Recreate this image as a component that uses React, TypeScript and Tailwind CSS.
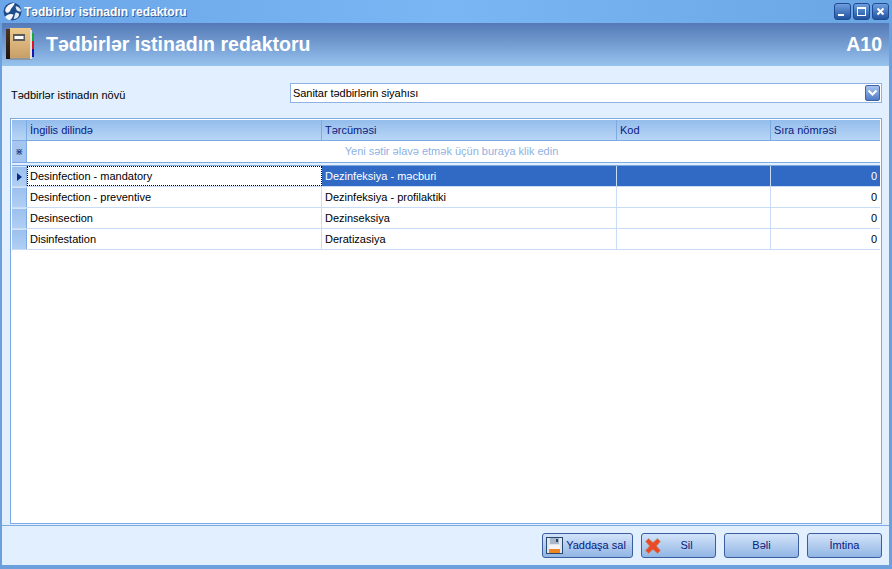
import React from 'react';

const COLS = 'grid grid-cols-[15px_295px_295px_154px_1fr]';

const rows = [
  { en: 'Desinfection - mandatory', az: 'Dezinfeksiya - məcburi', selected: true },
  { en: 'Desinfection - preventive', az: 'Dezinfeksiya - profilaktiki' },
  { en: 'Desinsection', az: 'Dezinseksiya' },
  { en: 'Disinfestation', az: 'Deratizasiya' },
];

const Globe = () => (
  <svg width="19" height="19" viewBox="0 0 18 18">
    <circle cx="9" cy="9" r="8.5" fill="#1c4c8c" />
    <path d="M2 8 C3 3 8 1 11 1 C10 5 8 5 7 8 C5 11 3 11 2 8Z" fill="#f4f8fc" />
    <path d="M12 4 C14 4 17 6 17 9 C14 9 12 8 12 4Z" fill="#dfeaf6" />
    <path d="M2 14 C5 11 8 11 10 12 C9 14 8 17 6 17 C5 17 3 16 2 14Z" fill="#f4f8fc" />
    <path d="M12 10 C14 10 16 11 15 13 C14 15 12 16 10 16 C11 14 11 12 12 10Z" fill="#dfeaf6" />
  </svg>
);

const WinButton = ({ kind }: { kind: 'min' | 'max' | 'close' }) => (
  <div className="w-[17px] h-[17px] rounded-[3px] border border-[#1f4a94] bg-gradient-to-b from-[#6f9fe0] to-[#23539f] flex items-center justify-center">
    <svg width="13" height="13" viewBox="0 0 13 13">
      {kind === 'min' && <rect x="2" y="9" width="6" height="2" fill="#fff" />}
      {kind === 'max' && (
        <path d="M2 2h9v9H2z M3 4v6h7V4z" fill="#fff" fillRule="evenodd" />
      )}
      {kind === 'close' && (
        <path d="M3.5 3l6 6M9.5 3l-6 6" stroke="#fff" strokeWidth="2" transform="translate(0 .5)" />
      )}
    </svg>
  </div>
);

const Notebook = () => (
  <svg width="28" height="33" viewBox="0 0 28 33">
    <defs>
      <linearGradient id="cover" x1="0" y1="0" x2="0" y2="1">
        <stop offset="0" stopColor="#ecc98c" />
        <stop offset="1" stopColor="#c79f68" />
      </linearGradient>
      <linearGradient id="spine" x1="0" y1="0" x2="0" y2="1">
        <stop offset="0" stopColor="#4a3524" />
        <stop offset="1" stopColor="#1c120c" />
      </linearGradient>
    </defs>
    <rect x="3" y="29" width="23" height="3" fill="#8a8478" opacity="0.6" />
    <rect x="25" y="5" width="3" height="8" fill="#12a83a" />
    <rect x="25" y="13" width="3" height="8" fill="#d8152e" />
    <rect x="25" y="21" width="3" height="8" fill="#1414b4" />
    <rect x="4" y="0" width="21" height="30" fill="url(#cover)" />
    <rect x="24" y="2" width="2" height="29" fill="#e8e4d8" />
    <rect x="0" y="1" width="4" height="30" fill="url(#spine)" />
    <rect x="7" y="6" width="12" height="7" fill="#5b5b5b" />
    <rect x="8.5" y="8" width="9" height="3" fill="#fff" />
  </svg>
);

const Floppy = () => (
  <svg width="17" height="17" viewBox="0 0 17 17">
    <rect x="0.5" y="0.5" width="16" height="16" fill="#dfe6ee" stroke="#27476e" />
    <rect x="4" y="1" width="9" height="6" fill="#a9b7c6" />
    <rect x="10" y="2" width="2" height="3" fill="#27476e" />
    <rect x="3" y="8" width="11" height="4" fill="#f4f4f4" />
    <rect x="3" y="12" width="11" height="4" fill="#ee8422" />
  </svg>
);

const RedX = () => (
  <svg width="16" height="16" viewBox="0 0 16 16">
    <path
      d="M3.5 .5L8 4.5 12.5 .5 15.5 3.5 11.5 8 15.5 12.5 12.5 15.5 8 11.5 3.5 15.5 .5 12.5 4.5 8 .5 3.5Z"
      fill="#ea4a26"
      stroke="#b79a80"
      strokeWidth="0.6"
    />
  </svg>
);

const Button = ({
  label,
  width,
  icon,
}: {
  label: string;
  width: string;
  icon?: React.ReactNode;
}) => (
  <button
    className={`${width} h-[25px] rounded-[3px] border border-[#3d5e9e] bg-gradient-to-b from-[#d3e4f9] to-[#91b5e4] flex items-center text-[#0a2080] text-[11px] px-[3px]`}
  >
    {icon}
    <span className="flex-1 text-center">{label}</span>
  </button>
);

export default function App() {
  return (
    <div className="w-[892px] h-[569px] flex flex-col overflow-hidden bg-[#e1effe] font-['Liberation_Sans',sans-serif] text-[11px] text-black">
      {/* title bar */}
      <div className="h-[23px] shrink-0 flex items-center pl-[3px] pr-[3px] gap-[2px] bg-gradient-to-r from-[#6aa6e8] via-[#7ab6f4] to-[#6aa6e4]">
        <Globe />
        <span className="flex-1 text-[12px] font-bold text-white [text-shadow:1px_1px_0_#3a5f96]">
          Tədbirlər istinadın redaktoru
        </span>
        <div className="flex gap-[2px]">
          <WinButton kind="min" />
          <WinButton kind="max" />
          <WinButton kind="close" />
        </div>
      </div>

      <div className="flex-1 min-h-0 flex flex-col border-l-[2px] border-r-[3px] border-b-[4px] border-[#6ca0dc]">
        {/* header */}
        <div className="h-[43px] shrink-0 flex items-center pl-[4px] pr-[7px] bg-gradient-to-b from-[#5479b6] to-[#97c3ee]">
          <Notebook />
          <span className="ml-[12px] flex-1 text-[19.5px] font-bold text-white">
            Tədbirlər istinadın redaktoru
          </span>
          <span className="text-[19.5px] font-bold text-white">A10</span>
        </div>

        {/* type selector */}
        <div className="h-[52px] shrink-0 flex items-center pl-[9px] pr-[7px] pt-[1px]">
          <span className="w-[279px] pt-[6px]">Tədbirlər istinadın növü</span>
          <div className="flex-1 h-[20px] bg-white border border-[#8fb2e2] flex items-center pl-[2px] pr-[1px] justify-between">
            <span className="pt-[1px] tracking-[-0.05px]">Sanitar tədbirlərin siyahısı</span>
            <div className="w-[15px] h-[16px] rounded-[2px] border border-[#3f64a8] bg-gradient-to-b from-[#a6c4f0] to-[#4f7cc6] flex items-center justify-center">
              <svg width="11" height="8" viewBox="0 0 11 8">
                <path d="M1.5 1.5L5.5 5.5 9.5 1.5" fill="none" stroke="#fff" strokeWidth="2" />
              </svg>
            </div>
          </div>
        </div>

        {/* grid */}
        <div className="flex-1 min-h-0 ml-[8px] mr-[7px] mb-[1px] bg-white border border-[#7eaae4] p-[1px]">
          <div className={`${COLS} h-[21px] border-b border-[#7eaae4] bg-gradient-to-b from-[#94bdec] to-[#b8d5f5] text-[#0a2080]`}>
            <div className="border-r border-[#7eaae4]" />
            <div className="border-r border-[#7eaae4] pl-[3px] pt-[2px]">İngilis dilində</div>
            <div className="border-r border-[#7eaae4] pl-[3px] pt-[2px]">Tərcüməsi</div>
            <div className="border-r border-[#7eaae4] pl-[3px] pt-[2px]">Kod</div>
            <div className="pl-[3px] pt-[2px]">Sıra nömrəsi</div>
          </div>
          <div className="flex h-[22px] border-b border-[#7eaae4]">
            <div className="w-[15px] bg-[#a4c6f0] border-r border-[#7eaae4] flex items-center justify-center text-[10px] text-[#1c3f8a]">
              ⋇
            </div>
            <div className="flex-1 flex items-center justify-center pr-[4px] text-[#8fb2e2]">
              Yeni sətir əlavə etmək üçün buraya klik edin
            </div>
          </div>
          <div className="h-[2px] bg-[#e1effe]" />
          <div className="border-t border-[#7eaae4]">
            {rows.map((row) => (
              <div key={row.en} className={`${COLS} h-[21px] border-b border-[#c9dcf5]`}>
                <div className="bg-gradient-to-b from-[#9cc0ee] to-[#b0cff3] border-r border-[#7eaae4] border-t border-t-[#d4e4f8] flex items-center justify-center">
                  {row.selected && (
                    <svg width="5" height="8" viewBox="0 0 5 8">
                      <path d="M0 0L5 4 0 8Z" fill="#0a2a80" />
                    </svg>
                  )}
                </div>
                <div
                  className={`flex items-center ${row.selected ? 'pl-[2px] border border-dotted border-black' : 'pl-[3px] border-r border-[#c9dcf5]'}`}
                >
                  {row.en}
                </div>
                <div className={`pl-[3px] flex items-center border-r border-[#c9dcf5] ${row.selected ? 'bg-[#316ac5] text-white' : ''}`}>
                  {row.az}
                </div>
                <div className={`border-r border-[#c9dcf5] ${row.selected ? 'bg-[#316ac5]' : ''}`} />
                <div className={`flex items-center justify-end pr-[3px] ${row.selected ? 'bg-[#316ac5] text-white' : ''}`}>
                  0
                </div>
              </div>
            ))}
          </div>
        </div>

        {/* footer */}
        <div className="h-[40px] shrink-0 border-t border-[#7eaae4] flex items-start justify-end gap-[8px] pt-[7px] pr-[7px]">
          <Button label="Yaddaşa sal" width="w-[91px]" icon={<Floppy />} />
          <Button label="Sil" width="w-[75px]" icon={<RedX />} />
          <Button label="Bəli" width="w-[75px]" />
          <Button label="İmtina" width="w-[75px]" />
        </div>
      </div>
    </div>
  );
}
